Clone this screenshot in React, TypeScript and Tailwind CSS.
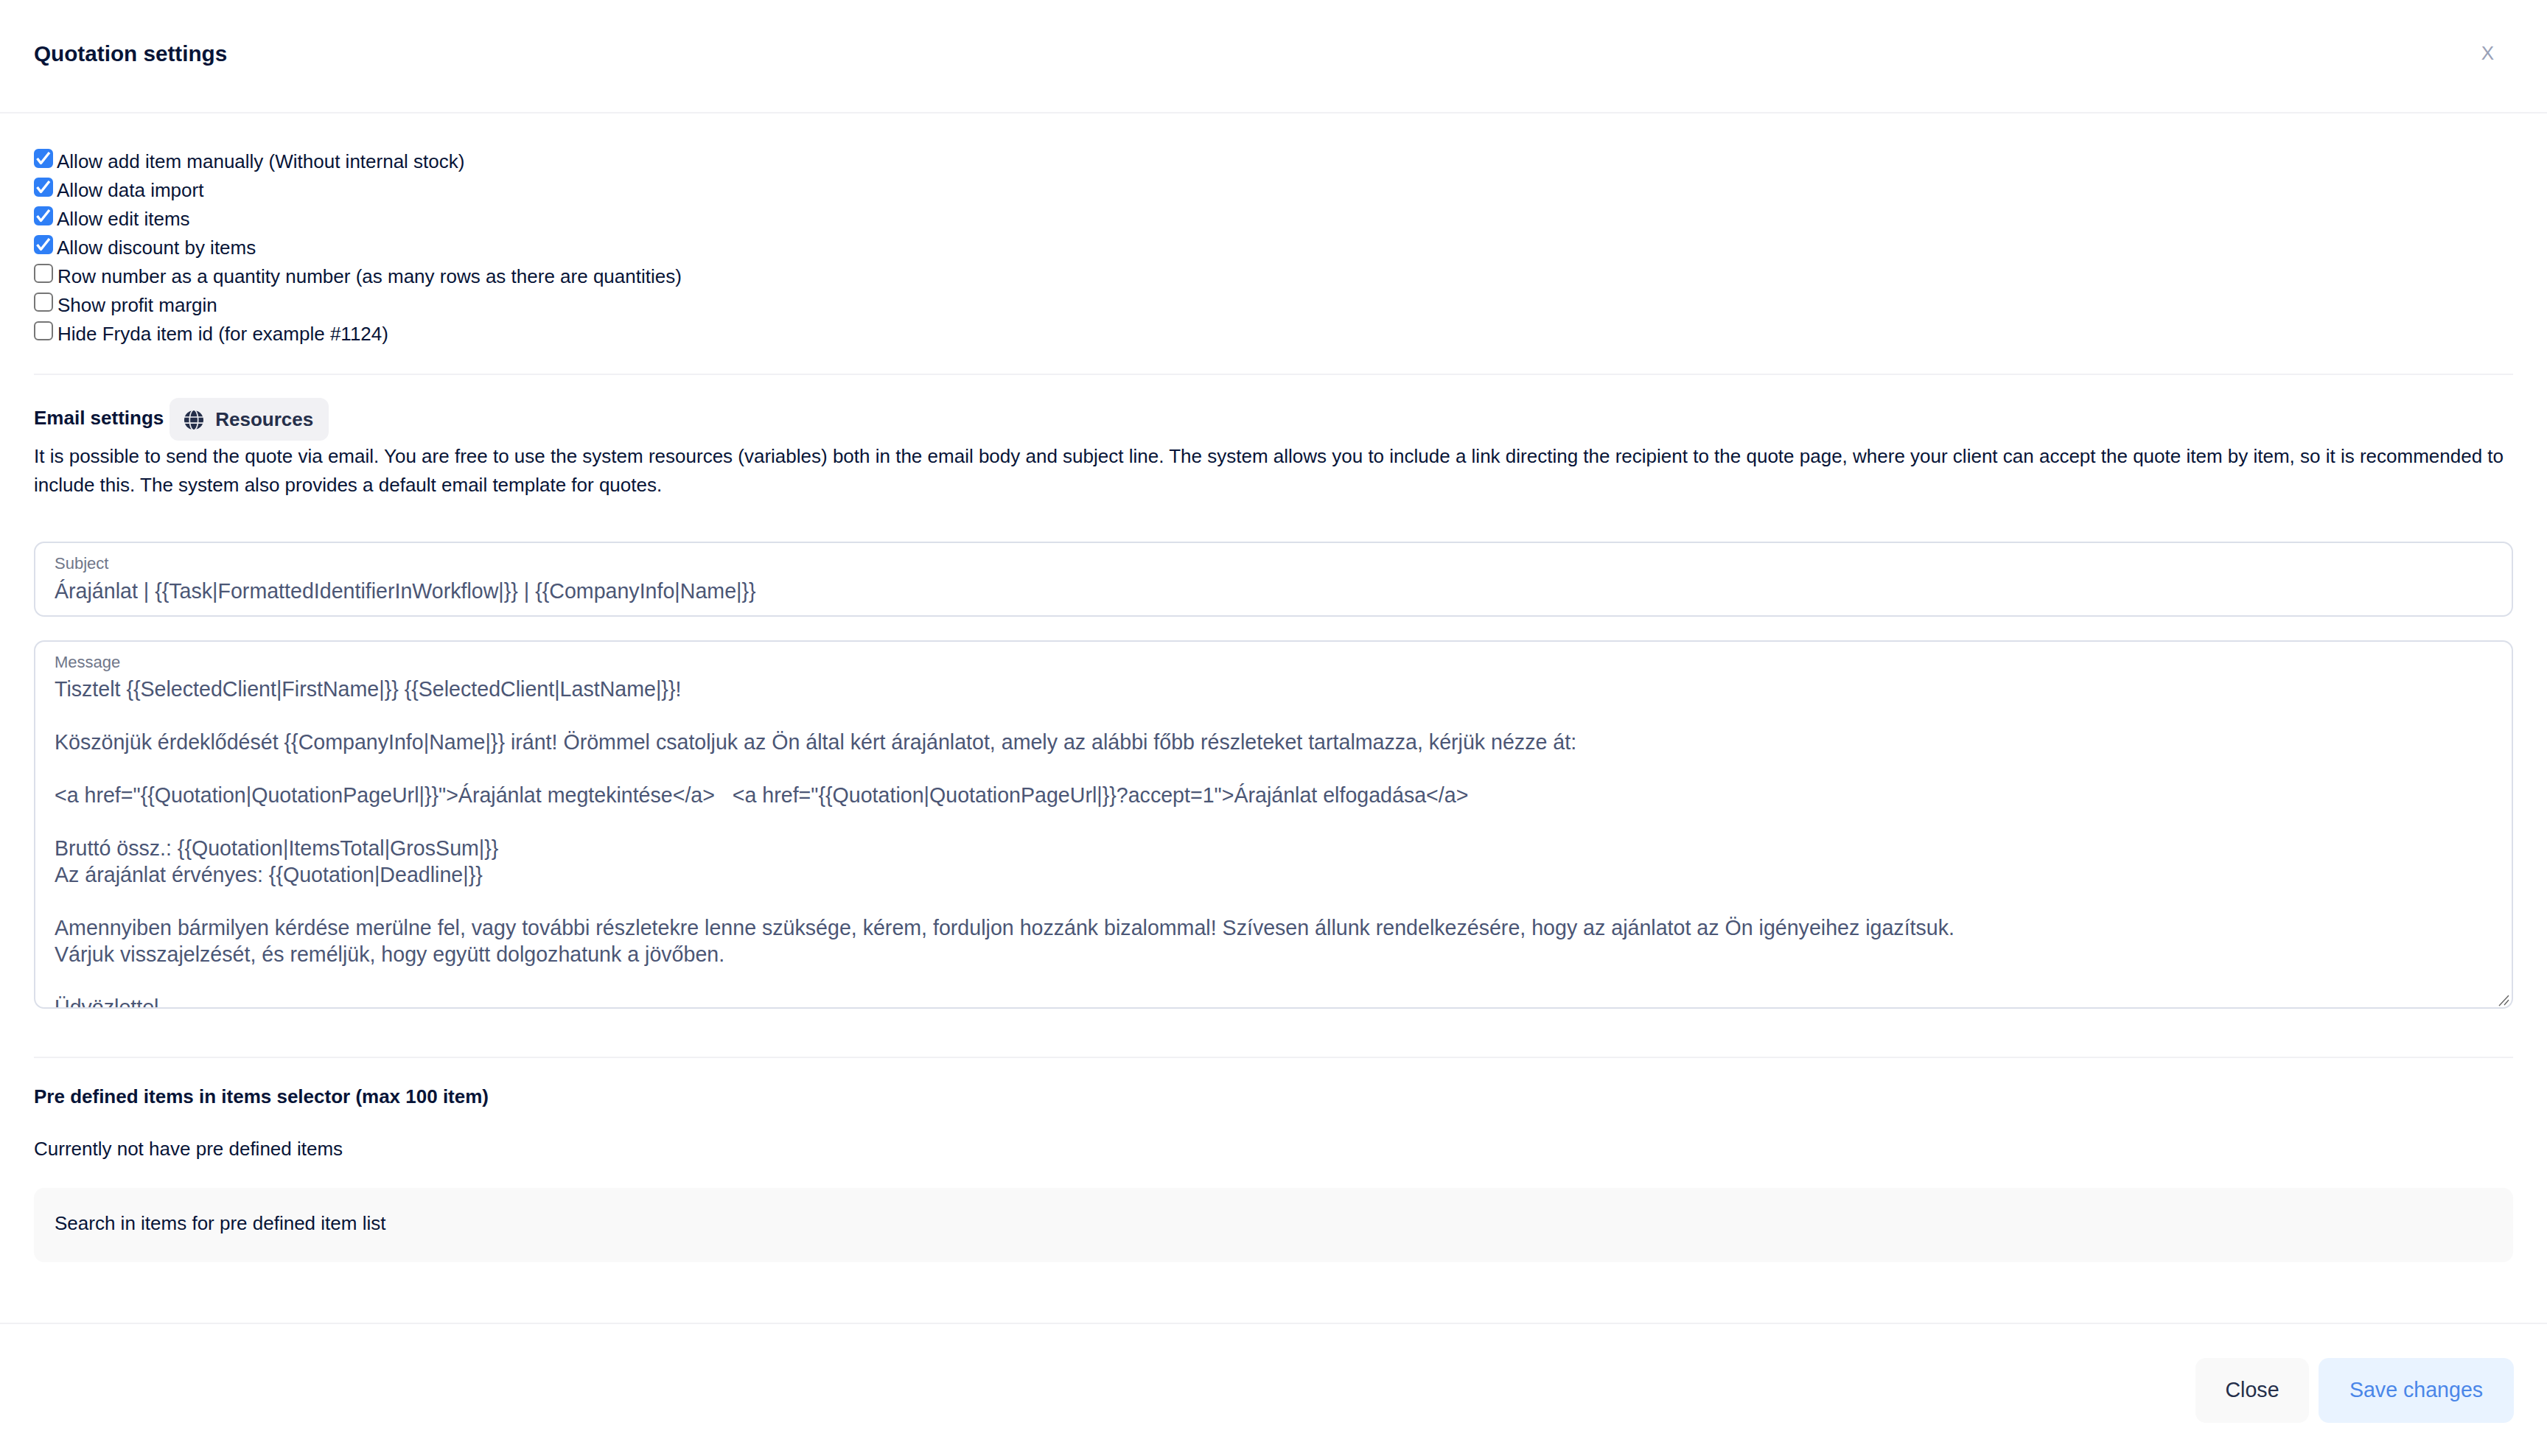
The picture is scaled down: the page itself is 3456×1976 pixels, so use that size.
import { FaGlobe } from "react-icons/fa6";

const options = [
  { label: "Allow add item manually (Without internal stock)", checked: true },
  { label: "Allow data import", checked: true },
  { label: "Allow edit items", checked: true },
  { label: "Allow discount by items", checked: true },
  { label: "Row number as a quantity number (as many rows as there are quantities)", checked: false },
  { label: "Show profit margin", checked: false },
  { label: "Hide Fryda item id (for example #1124)", checked: false },
];

const message = `Tisztelt {{SelectedClient|FirstName|}} {{SelectedClient|LastName|}}!

Köszönjük érdeklődését {{CompanyInfo|Name|}} iránt! Örömmel csatoljuk az Ön által kért árajánlatot, amely az alábbi főbb részleteket tartalmazza, kérjük nézze át:

<a href="{{Quotation|QuotationPageUrl|}}">Árajánlat megtekintése</a>   <a href="{{Quotation|QuotationPageUrl|}}?accept=1">Árajánlat elfogadása</a>

Bruttó össz.: {{Quotation|ItemsTotal|GrosSum|}}
Az árajánlat érvényes: {{Quotation|Deadline|}}

Amennyiben bármilyen kérdése merülne fel, vagy további részletekre lenne szüksége, kérem, forduljon hozzánk bizalommal! Szívesen állunk rendelkezésére, hogy az ajánlatot az Ön igényeihez igazítsuk.
Várjuk visszajelzését, és reméljük, hogy együtt dolgozhatunk a jövőben.

Üdvözlettel,
{{CompanyInfo|Name|}}`;

export default function App() {
  return (
    <div className="h-[1976px] overflow-hidden bg-white font-['Liberation_Sans',Arial,sans-serif] text-[26px] leading-[39px] text-[#071437]">
      <header className="flex h-[154px] items-center justify-between border-b-2 border-[#f1f1f4] pb-[8px] pl-[46px] pr-[72px]">
        <h1 className="text-[29.7px] font-bold">Quotation settings</h1>
        <button className="text-[26px] text-[#99a1b7]">X</button>
      </header>

      <main className="px-[46px] pt-[46px]">
        <div className="border-b-2 border-[#f1f1f4] pb-[34px]">
          {options.map(({ label, checked }) => (
            <label key={label} className="flex h-[39px] items-start">
              <span className="relative mt-[2px] size-[26px] shrink-0">
                <input
                  type="checkbox"
                  defaultChecked={checked}
                  className="block size-[26px] appearance-none rounded-[6px] border-2 border-[#767676] bg-white checked:border-[#2f7ff6] checked:bg-[#2f7ff6]"
                />
                {checked && (
                  <svg viewBox="0 0 26 26" className="pointer-events-none absolute inset-0 size-[26px]">
                    <path d="M4.5 13 L9.5 19.5 L21 5" fill="none" stroke="#fff" strokeWidth="3.4" strokeLinejoin="round" />
                  </svg>
                )}
              </span>
              <span className={checked ? "ml-[5px]" : "ml-[6px]"}>{label}</span>
            </label>
          ))}
        </div>

        <div className="mt-[31px] flex h-[58px] items-center">
          <h2 className="mb-[4px] font-bold">Email settings</h2>
          <button className="ml-[8px] flex h-[58px] w-[216px] items-center gap-[16px] rounded-[12px] bg-[#f1f1f4] pl-[20px] font-bold text-[#252f4a]">
            <FaGlobe className="mt-[2px] size-[26px]" />
            Resources
          </button>
        </div>
        <p className="mt-[2px]">
          It is possible to send the quote via email. You are free to use the system resources (variables) both in the email body and subject line. The system allows you to include a link directing the recipient to the quote page, where your client can accept the quote item by item, so it is recommended to include this. The system also provides a default email template for quotes.
        </p>

        <div className="mt-[57px] h-[102px] rounded-[14px] border-2 border-[#dbdfe9] px-[26px] pt-[14px]">
          <label className="block text-[22px] leading-[28px] text-[#6f7689]">Subject</label>
          <input
            readOnly
            value="Árajánlat | {{Task|FormattedIdentifierInWorkflow|}} | {{CompanyInfo|Name|}}"
            className="mt-[4px] block w-full text-[28.6px] leading-[38px] text-[#4b5675] outline-none"
          />
        </div>

        <div className="relative mt-[32px] h-[500px] rounded-[14px] border-2 border-[#dbdfe9]">
          <label className="absolute left-[26px] top-[14px] text-[22px] leading-[28px] text-[#6f7689]">Message</label>
          <textarea
            readOnly
            defaultValue={message}
            className="block h-full w-full resize-none rounded-[14px] px-[26px] pt-[46px] text-[28.6px] leading-[36px] text-[#4b5675] outline-none [scrollbar-width:none]"
          />
          <svg viewBox="0 0 18 18" className="pointer-events-none absolute bottom-0 right-[2px] size-[18px]">
            <path d="M3 16 L16 2 M10 15 L16 8" stroke="#666" strokeWidth="1.4" />
          </svg>
        </div>

        <div className="mt-[65px] border-t-2 border-[#f1f1f4] pt-[33px]">
          <h2 className="font-bold">Pre defined items in items selector (max 100 item)</h2>
          <p className="mt-[32px]">Currently not have pre defined items</p>
          <div className="mt-[33px] flex h-[101px] items-center rounded-[14px] bg-[#f9f9f9] px-[28px] pb-[5px]">
            Search in items for pre defined item list
          </div>
        </div>
      </main>

      <footer className="mt-[82px] flex justify-end gap-[13px] border-t-2 border-[#f1f1f4] pr-[45px] pt-[46px]">
        <button className="h-[88px] w-[154px] rounded-[14px] bg-[#f9f9f9] pb-[2px] text-[28.6px] text-[#252f4a]">Close</button>
        <button className="h-[88px] w-[265px] rounded-[14px] bg-[#e9f3ff] pb-[2px] text-[28.6px] text-[#4a86e8]">Save changes</button>
      </footer>
    </div>
  );
}
